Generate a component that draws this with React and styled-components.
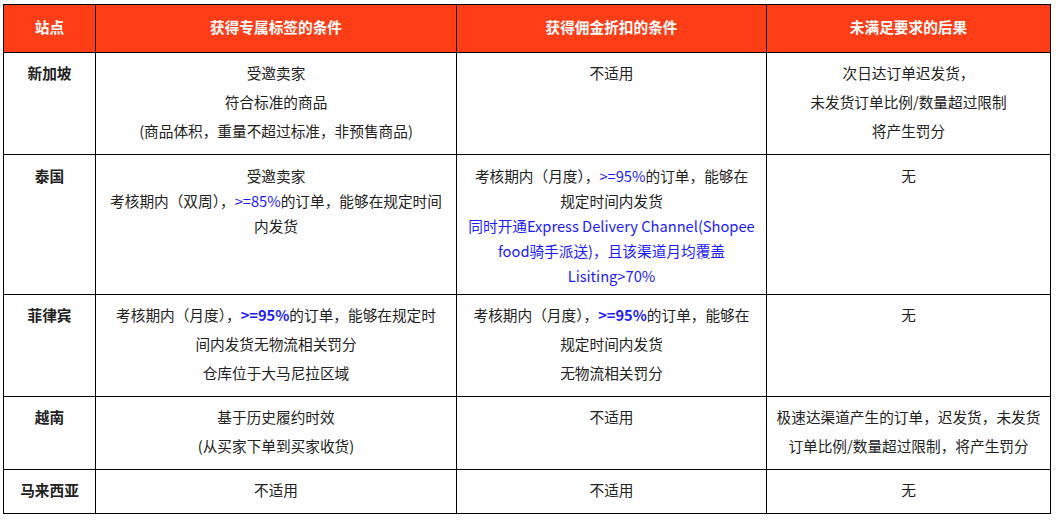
import React from "react";
import styled, { createGlobalStyle } from "styled-components";

const COLORS = {
  header: "#ff3d17",
  border: "#000",
  text: "#222",
  blue: "#1c1cff",
};

const GlobalStyle = createGlobalStyle`
  body {
    margin: 0;
    background: #fff;
    font-family: "Noto Sans CJK SC", "Noto Sans", sans-serif;
  }
`;

const Table = styled.table`
  margin: 4px 0 0 3px;
  width: 1047px;
  table-layout: fixed;
  border-collapse: collapse;
  font-size: 14.67px;
  color: ${COLORS.text};
`;

const HeadCell = styled.th`
  background: ${COLORS.header};
  color: #fff;
  font-weight: 700;
  border: 1px solid ${COLORS.border};
  padding: 7px 6px 11px;
  line-height: 29px;
  text-align: center;
`;

const Cell = styled.td`
  border: 1px solid ${COLORS.border};
  padding: ${({ $tight }) => ($tight ? "8px 6px 6px" : "5px 6px 9px")};
  text-align: center;
  vertical-align: top;
  line-height: ${({ $tight }) => ($tight ? "25px" : "29px")};
  font-weight: ${({ $site }) => ($site ? 700 : 400)};
  white-space: nowrap;
`;

const Hi = styled.span`
  color: ${COLORS.blue};
  font-weight: ${({ $bold }) => ($bold ? 700 : 400)};
`;

const HEADERS = ["站点", "获得专属标签的条件", "获得佣金折扣的条件", "未满足要求的后果"];
const WIDTHS = [92, 361, 310, 284];

// each row: site name, then the three condition cells
const ROWS = [
  {
    site: "新加坡",
    cells: [
      <>
        受邀卖家
        <br />
        符合标准的商品
        <br />
        (商品体积，重量不超过标准，非预售商品)
      </>,
      <>不适用</>,
      <>
        次日达订单迟发货，
        <br />
        未发货订单比例/数量超过限制
        <br />
        将产生罚分
      </>,
    ],
  },
  {
    site: "泰国",
    tight: true,
    cells: [
      <>
        受邀卖家
        <br />
        考核期内（双周），<Hi>&gt;=85%</Hi>的订单，能够在规定时间
        <br />
        内发货
      </>,
      <>
        考核期内（月度），<Hi>&gt;=95%</Hi>的订单，能够在
        <br />
        规定时间内发货
        <br />
        <Hi>
          同时开通Express Delivery Channel(Shopee
          <br />
          food骑手派送)，且该渠道月均覆盖
          <br />
          Lisiting&gt;70%
        </Hi>
      </>,
      <>无</>,
    ],
  },
  {
    site: "菲律宾",
    cells: [
      <>
        考核期内（月度），<Hi $bold>&gt;=95%</Hi>的订单，能够在规定时
        <br />
        间内发货无物流相关罚分
        <br />
        仓库位于大马尼拉区域
      </>,
      <>
        考核期内（月度），<Hi $bold>&gt;=95%</Hi>的订单，能够在
        <br />
        规定时间内发货
        <br />
        无物流相关罚分
      </>,
      <>无</>,
    ],
  },
  {
    site: "越南",
    cells: [
      <>
        基于历史履约时效
        <br />
        (从买家下单到买家收货)
      </>,
      <>不适用</>,
      <>
        极速达渠道产生的订单，迟发货，未发货
        <br />
        订单比例/数量超过限制，将产生罚分
      </>,
    ],
  },
  {
    site: "马来西亚",
    cells: [<>不适用</>, <>不适用</>, <>无</>],
  },
];

const App = () => {
  return (
    <>
      <GlobalStyle />
      <Table>
        <colgroup>
          {WIDTHS.map((w, i) => (
            <col key={i} style={{ width: w }} />
          ))}
        </colgroup>
        <thead>
          <tr>
            {HEADERS.map((h) => (
              <HeadCell key={h}>{h}</HeadCell>
            ))}
          </tr>
        </thead>
        <tbody>
          {ROWS.map((row) => (
            <tr key={row.site}>
              <Cell $site $tight={row.tight}>
                {row.site}
              </Cell>
              {row.cells.map((content, i) => (
                <Cell key={i} $tight={row.tight}>
                  {content}
                </Cell>
              ))}
            </tr>
          ))}
        </tbody>
      </Table>
    </>
  );
};

export default App;
